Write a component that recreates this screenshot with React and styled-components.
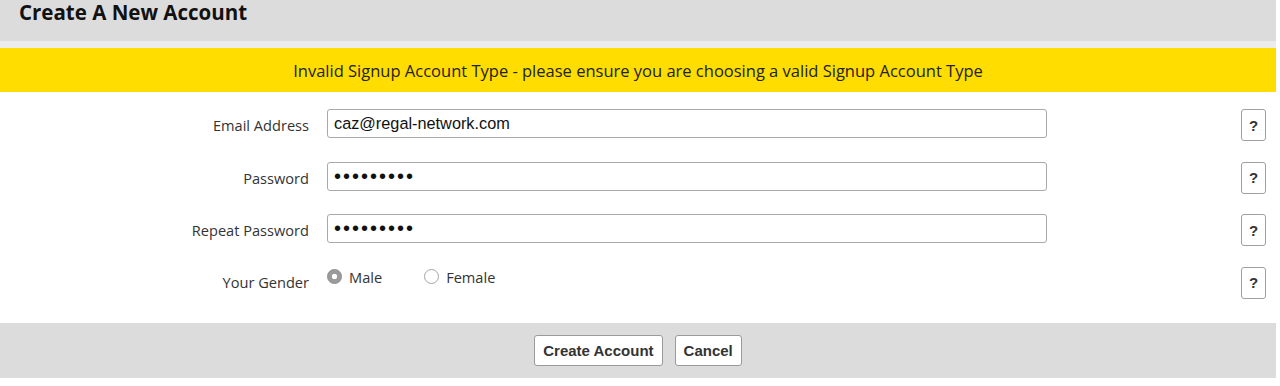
import styled, { createGlobalStyle } from "styled-components";

const GlobalStyle = createGlobalStyle`
  body {
    margin: 0;
    background: #ffffff;
    font-family: "Open Sans", "Liberation Sans", sans-serif;
  }
`;

// 페이지 전체 틀
const Page = styled.div`
  width: 1276px;
`;

const Header = styled.div`
  height: 41px;
  background: #dcdcdc;
  border-bottom: 7px solid #ececec;
  padding: 0 19px;
  display: flex;
  align-items: flex-start;
`;

const Title = styled.h1`
  margin: 0;
  line-height: 25px;
  font-size: 20.5px;
  font-weight: 700;
  color: #111;
`;

const Banner = styled.div`
  height: 44px;
  background: #ffdd00;
  display: flex;
  align-items: center;
  justify-content: center;
  font-size: 16.5px;
  color: #222;
`;

const Form = styled.div`
  padding: 17px 10px 24px 0;
  display: flex;
  flex-direction: column;
  gap: 20.5px;
`;

const Row = styled.div`
  display: grid;
  grid-template-columns: 309px 720px 1fr 25px;
  column-gap: 18px;
  height: 32px;
`;

const Label = styled.label`
  text-align: right;
  padding-top: ${(p) => (p.$low ? 5 : 6)}px;
  line-height: 20px;
  font-size: 14.6px;
  color: #333;
`;

const Input = styled.input`
  box-sizing: border-box;
  height: 29px;
  width: 100%;
  border: 1px solid #a9a9a9;
  border-radius: 3px;
  padding: 0 6px;
  font-family: "Liberation Sans", Arial, sans-serif;
  font-size: 16.3px;
  color: #111;
  outline: none;
  &[type="password"] {
    font-size: 20px;
    letter-spacing: 2px;
  }
`;

const RadioGroup = styled.div`
  display: flex;
  align-items: flex-start;
  gap: 42px;
  padding-top: 1px;
`;

const RadioOption = styled.label`
  display: flex;
  align-items: center;
  gap: 7px;
  font-size: 14.6px;
  color: #333;
  line-height: 18px;
`;

const Radio = styled.span`
  box-sizing: border-box;
  width: 15px;
  height: 15px;
  border-radius: 50%;
  border: 1px solid ${(p) => (p.$checked ? "#8a8a8a" : "#a5a5a5")};
  background: ${(p) =>
    p.$checked
      ? "radial-gradient(circle, #ffffff 0 2.5px, #9b9b9b 3px)"
      : "#ffffff"};
`;

const HelpButton = styled.button`
  box-sizing: border-box;
  width: 25px;
  height: 32px;
  padding: 0;
  background: #fff;
  border: 1px solid #a0a0a0;
  border-radius: 3px;
  font-family: "Liberation Sans", Arial, sans-serif;
  font-weight: 700;
  font-size: 15px;
  color: #333;
`;

const Footer = styled.div`
  background: #dcdcdc;
  padding: 12px 0;
  display: flex;
  justify-content: center;
  gap: 12px;
`;

const Button = styled.button`
  box-sizing: border-box;
  height: 31px;
  padding: 0 8px;
  background: #fff;
  border: 1px solid #9a9a9a;
  border-radius: 3px;
  font-family: "Liberation Sans", Arial, sans-serif;
  font-weight: 700;
  font-size: 15px;
  color: #333;
`;

const fields = [
  { label: "Email Address", type: "text", value: "caz@regal-network.com" },
  { label: "Password", type: "password", value: "123456789" },
  { label: "Repeat Password", type: "password", value: "123456789" },
];

const App = () => {
  return (
    <Page>
      <GlobalStyle />
      <Header>
        <Title>Create A New Account</Title>
      </Header>
      <Banner>
        Invalid Signup Account Type - please ensure you are choosing a valid
        Signup Account Type
      </Banner>
      <Form>
        {fields.map((f) => (
          <Row key={f.label}>
            <Label>{f.label}</Label>
            <Input type={f.type} defaultValue={f.value} />
            <span />
            <HelpButton>?</HelpButton>
          </Row>
        ))}
        {/* 성별 선택 */}
        <Row>
          <Label $low>Your Gender</Label>
          <RadioGroup>
            <RadioOption>
              <Radio $checked />
              Male
            </RadioOption>
            <RadioOption>
              <Radio />
              Female
            </RadioOption>
          </RadioGroup>
          <span />
          <HelpButton>?</HelpButton>
        </Row>
      </Form>
      <Footer>
        <Button>Create Account</Button>
        <Button>Cancel</Button>
      </Footer>
    </Page>
  );
};

export default App;
